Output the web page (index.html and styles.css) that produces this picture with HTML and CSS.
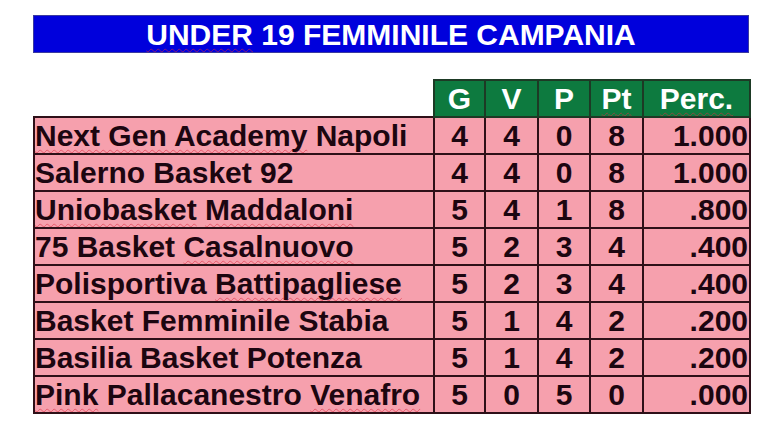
FILE: index.html
```html
<!DOCTYPE html>
<html lang="it">
<head>
<meta charset="utf-8">
<title>Under 19 Femminile Campania</title>
<link rel="stylesheet" href="styles.css">
</head>
<body>
<div class="page">
  <div class="title"><span class="sp">UNDER</span> 19 FEMMINILE CAMPANIA</div>
  <table class="standings">
    <colgroup>
      <col class="c-name"><col class="c-g"><col class="c-v"><col class="c-p"><col class="c-pt"><col class="c-perc">
    </colgroup>
    <thead>
      <tr>
        <th class="blank"></th>
        <th>G</th><th>V</th><th>P</th><th><span class="sp">Pt</span></th><th><span class="sp">Perc.</span></th>
      </tr>
    </thead>
    <tbody>
      <tr><td class="name"><span class="sp">Next Gen Academy</span> Napoli</td><td>4</td><td>4</td><td>0</td><td>8</td><td class="perc">1.000</td></tr>
      <tr><td class="name">Salerno Basket 92</td><td>4</td><td>4</td><td>0</td><td>8</td><td class="perc">1.000</td></tr>
      <tr><td class="name"><span class="sp">Uniobasket</span> <span class="sp">Maddaloni</span></td><td>5</td><td>4</td><td>1</td><td>8</td><td class="perc">.800</td></tr>
      <tr><td class="name">75 Basket <span class="sp">Casalnuovo</span></td><td>5</td><td>2</td><td>3</td><td>4</td><td class="perc">.400</td></tr>
      <tr><td class="name">Polisportiva <span class="sp">Battipagliese</span></td><td>5</td><td>2</td><td>3</td><td>4</td><td class="perc">.400</td></tr>
      <tr><td class="name">Basket Femminile Stabia</td><td>5</td><td>1</td><td>4</td><td>2</td><td class="perc">.200</td></tr>
      <tr><td class="name">Basilia Basket Potenza</td><td>5</td><td>1</td><td>4</td><td>2</td><td class="perc">.200</td></tr>
      <tr><td class="name"><span class="sp">Pink</span> Pallacanestro <span class="sp">Venafro</span></td><td>5</td><td>0</td><td>5</td><td>0</td><td class="perc">.000</td></tr>
    </tbody>
  </table>
</div>
</body>
</html>
```
FILE: styles.css
```css
html, body {
  margin: 0;
  padding: 0;
  background: #ffffff;
}
body {
  font-family: "Liberation Sans", Arial, sans-serif;
}
.page {
  padding: 15px 0 0 33px;
  width: 716px;
}
.title {
  background: #0000dc;
  color: #ffffff;
  font-weight: bold;
  font-size: 30px;
  height: 38px;
  line-height: 38px;
  text-align: center;
  border: 1px solid #3a3aa0;
  box-sizing: border-box;
  width: 716px;
}
.sp {
  text-decoration: underline wavy rgba(220, 40, 60, 0.55);
  text-decoration-thickness: 1px;
  text-underline-offset: 3px;
  text-decoration-skip-ink: none;
}
.standings {
  margin-top: 26px;
  border-collapse: collapse;
  table-layout: fixed;
  width: 716px;
  font-weight: bold;
  font-size: 30px;
}
.c-name { width: 400px; }
.c-g { width: 51px; }
.c-v { width: 53px; }
.c-p { width: 52px; }
.c-pt { width: 53px; }
.c-perc { width: 107px; }
.standings th,
.standings td {
  border: 2px solid #2e1018;
  height: 35px;
  padding: 0;
  text-align: center;
  vertical-align: middle;
  line-height: 33px;
  white-space: nowrap;
  overflow: hidden;
}
.standings th {
  background: #0d7a3f;
  color: #ffffff;
  border-color: #1d3a25;
}
.standings th.blank {
  background: transparent;
  border: none;
}
.standings td {
  background: #f6a0ad;
  color: #1c0610;
}
.standings td.name {
  text-align: left;
  padding-left: 0;
}
.standings td.perc {
  text-align: right;
  padding-right: 1px;
}
```
